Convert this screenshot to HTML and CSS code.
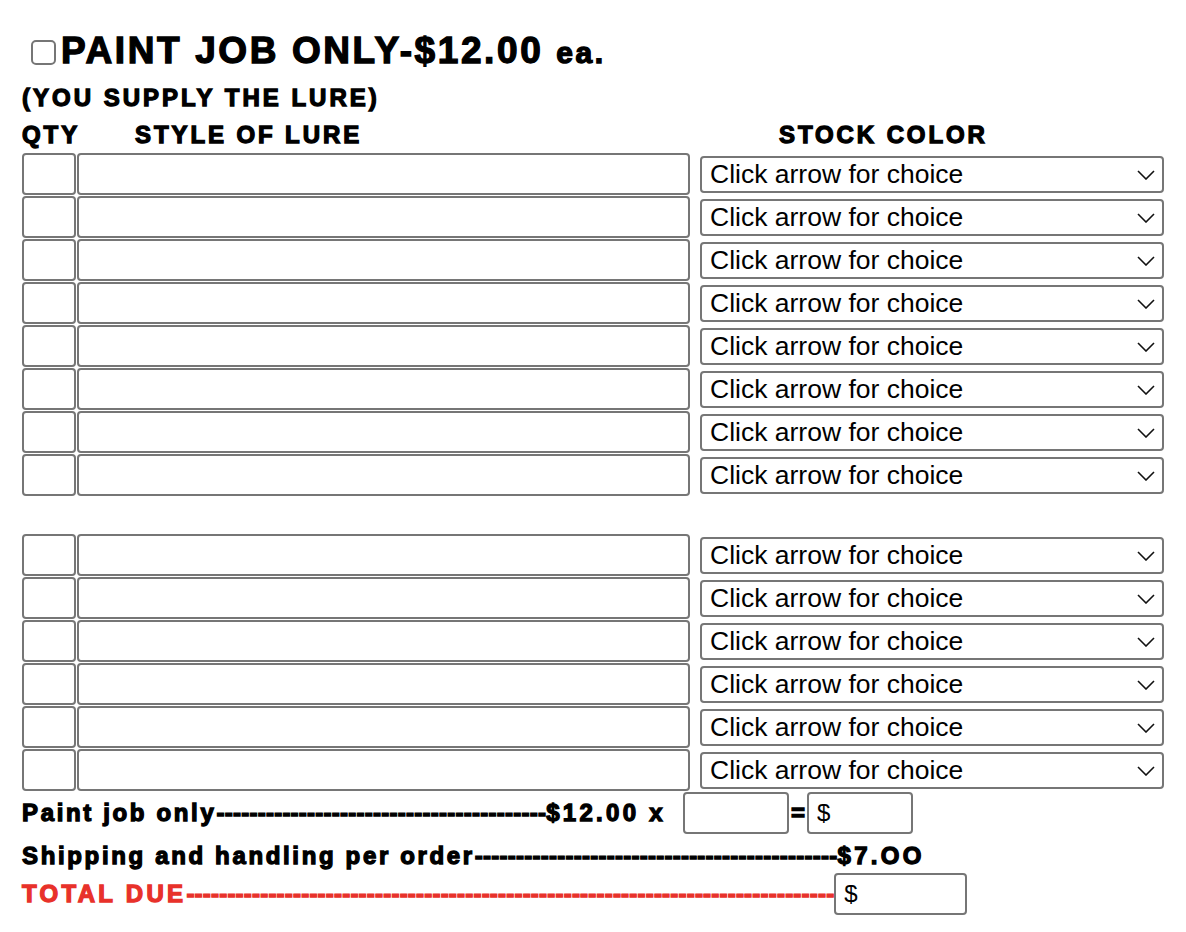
FILE: index.html
```html
<!DOCTYPE html>
<html lang="en">
<head>
    <meta charset="UTF-8">
    <meta name="viewport" content="width=device-width, initial-scale=1.0">
    <link rel="stylesheet" href="styles.css">
    <title>Paint Job Only</title>
</head>
<body>
    <form class="order">
        <div class="title-line">
            <input type="checkbox" class="pick">
            <h1>PAINT JOB ONLY-$12.00 <span class="ea">ea.</span></h1>
        </div>
        <p class="supply">(YOU SUPPLY THE LURE)</p>

        <div class="heads">
            <span class="h-qty">QTY</span>
            <span class="h-style">STYLE OF LURE</span>
            <span class="h-color">STOCK COLOR</span>
        </div>

        <div class="group" id="groupOne"></div>
        <div class="group second" id="groupTwo"></div>

        <div class="sum-line">
            <span class="word">Paint job only</span><span class="leader">----------------------------------------</span><span class="word wider">$12.00 x</span>
            <input type="text" class="box count">
            <span class="equals">=</span>
            <input type="text" class="box money" value="$">
        </div>
        <div class="sum-line ship">
            <span class="word">Shipping and handling per order</span><span class="leader">--------------------------------------------</span><span class="word wider">$7.OO</span>
        </div>
        <div class="sum-line total">
            <span class="word wider">TOTAL DUE</span><span class="leader">-------------------------------------------------------------------------------</span><input type="text" class="box money wide" value="$">
        </div>
    </form>

    <script>
        function makeRow() {
            const row = document.createElement('div');
            row.className = 'row';
            row.innerHTML =
                '<input type="text" class="qty">' +
                '<input type="text" class="lure">' +
                '<div class="pick-wrap">' +
                    '<select class="color"><option>Click arrow for choice</option></select>' +
                    '<svg class="chev" width="18" height="10" viewBox="0 0 18 10"><path d="M1 1 L9 9 L17 1" fill="none" stroke="#111" stroke-width="1.6"/></svg>' +
                '</div>';
            return row;
        }

        const groupOne = document.getElementById('groupOne');
        const groupTwo = document.getElementById('groupTwo');
        for (let i = 0; i < 8; i++) groupOne.appendChild(makeRow());
        for (let i = 0; i < 6; i++) groupTwo.appendChild(makeRow());
    </script>
</body>
</html>
```

FILE: styles.css
```css
body {
    margin: 0;
    padding: 0;
    background-color: #ffffff;
    color: #000000;
    font-family: "Liberation Sans", Arial, sans-serif;
}

.order {
    padding: 30px 0 0 22px;
    width: 1150px;
}

/* heavy headline text, faking Arial Black */
.title-line h1,
.supply,
.heads,
.sum-line {
    font-weight: bold;
    -webkit-text-stroke: 1.3px #000;
}

.title-line {
    display: flex;
    align-items: center;
    height: 44px;
}

.pick {
    appearance: none;
    -webkit-appearance: none;
    width: 25px;
    height: 25px;
    margin: 0 5px 0 9px;
    border: 2px solid #767676;
    border-radius: 5px;
    background: #fff;
}

.title-line h1 {
    margin: 0;
    font-size: 37px;
    letter-spacing: 2.6px;
    line-height: 44px;
}

.ea {
    font-size: 30px;
}

.supply {
    margin: 9px 0 0 0;
    font-size: 24px;
    line-height: 30px;
    letter-spacing: 3px;
}

.heads {
    display: flex;
    font-size: 24px;
    line-height: 30px;
    letter-spacing: 2.9px;
    margin-top: 7px;
}

.h-qty {
    width: 113px;
}

.h-style {
    width: 644px;
}

.group {
    margin-top: 3px;
}

.group.second {
    margin-top: 38px;
}

.row {
    display: flex;
    align-items: center;
    height: 42px;
    margin-bottom: 1px;
}

.qty,
.lure,
.box {
    box-sizing: border-box;
    height: 42px;
    border: 2px solid #767676;
    border-radius: 4px;
    background: #fff;
    margin: 0;
    padding: 0 8px;
    font-family: "Liberation Sans", Arial, sans-serif;
    font-size: 26px;
}

.qty {
    width: 54px;
}

.lure {
    width: 613px;
    margin-left: 1px;
}

.pick-wrap {
    position: relative;
    margin-left: 10px;
}

.color {
    appearance: none;
    -webkit-appearance: none;
    box-sizing: border-box;
    width: 464px;
    height: 37px;
    border: 2px solid #767676;
    border-radius: 4px;
    background: #fff;
    color: #000;
    padding: 0 8px;
    font-family: "Liberation Sans", Arial, sans-serif;
    font-size: 26.5px;
}

.chev {
    position: absolute;
    right: 9px;
    top: 14px;
    pointer-events: none;
}

.sum-line {
    display: flex;
    align-items: center;
    font-size: 24px;
    white-space: nowrap;
}

.word {
    letter-spacing: 2.65px;
}

.word.wider {
    letter-spacing: 3.3px;
}

.leader {
    letter-spacing: 0.25px;
}

.count {
    width: 106px;
    margin-left: 17px;
}

.equals {
    margin: 0 2px;
}

.money {
    width: 106px;
    padding-left: 8px;
    -webkit-text-stroke: 0;
    font-weight: normal;
    font-size: 24px;
}

.money.wide {
    width: 133px;
}

.ship {
    height: 34px;
    margin-top: 5px;
}

.total {
    color: #e8312a;
    -webkit-text-stroke-color: #e8312a;
}

.total .leader {
    letter-spacing: 0.21px;
}

.total .money {
    color: #000;
}
```
